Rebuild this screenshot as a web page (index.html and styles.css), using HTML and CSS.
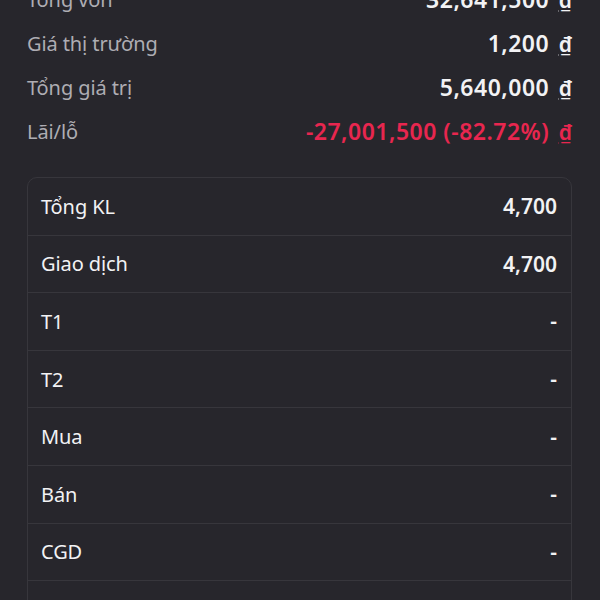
FILE: index.html
```html
<!DOCTYPE html>
<html lang="vi">
<head>
    <meta charset="UTF-8">
    <meta name="viewport" content="width=device-width, initial-scale=1.0">
    <title>Chi tiết danh mục</title>
    <link rel="stylesheet" href="styles.css">
</head>
<body>
    <div class="page">
        <div class="summary">
            <div class="summary-row">
                <span class="label">Tổng vốn</span>
                <span class="value">32,641,500 <u class="dong">₫</u></span>
            </div>
            <div class="summary-row">
                <span class="label">Giá thị trường</span>
                <span class="value">1,200 <u class="dong">₫</u></span>
            </div>
            <div class="summary-row">
                <span class="label">Tổng giá trị</span>
                <span class="value">5,640,000 <u class="dong">₫</u></span>
            </div>
            <div class="summary-row">
                <span class="label">Lãi/lỗ</span>
                <span class="value loss">-27,001,500 (-82.72%) <u class="dong">₫</u></span>
            </div>
        </div>

        <div class="card">
            <div class="card-row"><span>Tổng KL</span><b>4,700</b></div>
            <div class="card-row"><span>Giao dịch</span><b>4,700</b></div>
            <div class="card-row"><span>T1</span><b>-</b></div>
            <div class="card-row"><span>T2</span><b>-</b></div>
            <div class="card-row"><span>Mua</span><b>-</b></div>
            <div class="card-row"><span>Bán</span><b>-</b></div>
            <div class="card-row"><span>CGD</span><b>-</b></div>
            <div class="card-row"><span>Cầm cố</span><b>-</b></div>
        </div>
    </div>
</body>
</html>
```

FILE: styles.css
```css
body {
    margin: 0;
    background: #27262c;
    font-family: "Noto Sans", "Open Sans", sans-serif;
    color: #f2f2f4;
    overflow: hidden;
}
.page {
    padding: 0 28px 0 27px;
}
.summary {
    margin-top: -23px;
}
.summary-row {
    display: flex;
    justify-content: space-between;
    align-items: center;
    height: 44px;
    font-size: 20px;
}
.summary-row .label {
    color: #aeadb3;
    letter-spacing: -0.1px;
}
.summary-row .value {
    font-size: 23px;
    font-weight: 600;
    letter-spacing: 0.5px;
}
.summary-row .dong {
    font-size: 21px;
    margin-left: 3px;
    letter-spacing: 0;
}
.summary-row .loss {
    color: #e8264f;
}
.card {
    margin-top: 24px;
    border: 1px solid #37363c;
    border-radius: 10px;
}
.card-row {
    display: flex;
    justify-content: space-between;
    align-items: center;
    height: 56.6px;
    padding: 0 14px 0 13px;
    border-bottom: 1px solid #37363c;
    font-size: 20px;
}
.card-row span {
    letter-spacing: -0.1px;
}
.card-row b {
    font-size: 21px;
    font-weight: 600;
}
```
